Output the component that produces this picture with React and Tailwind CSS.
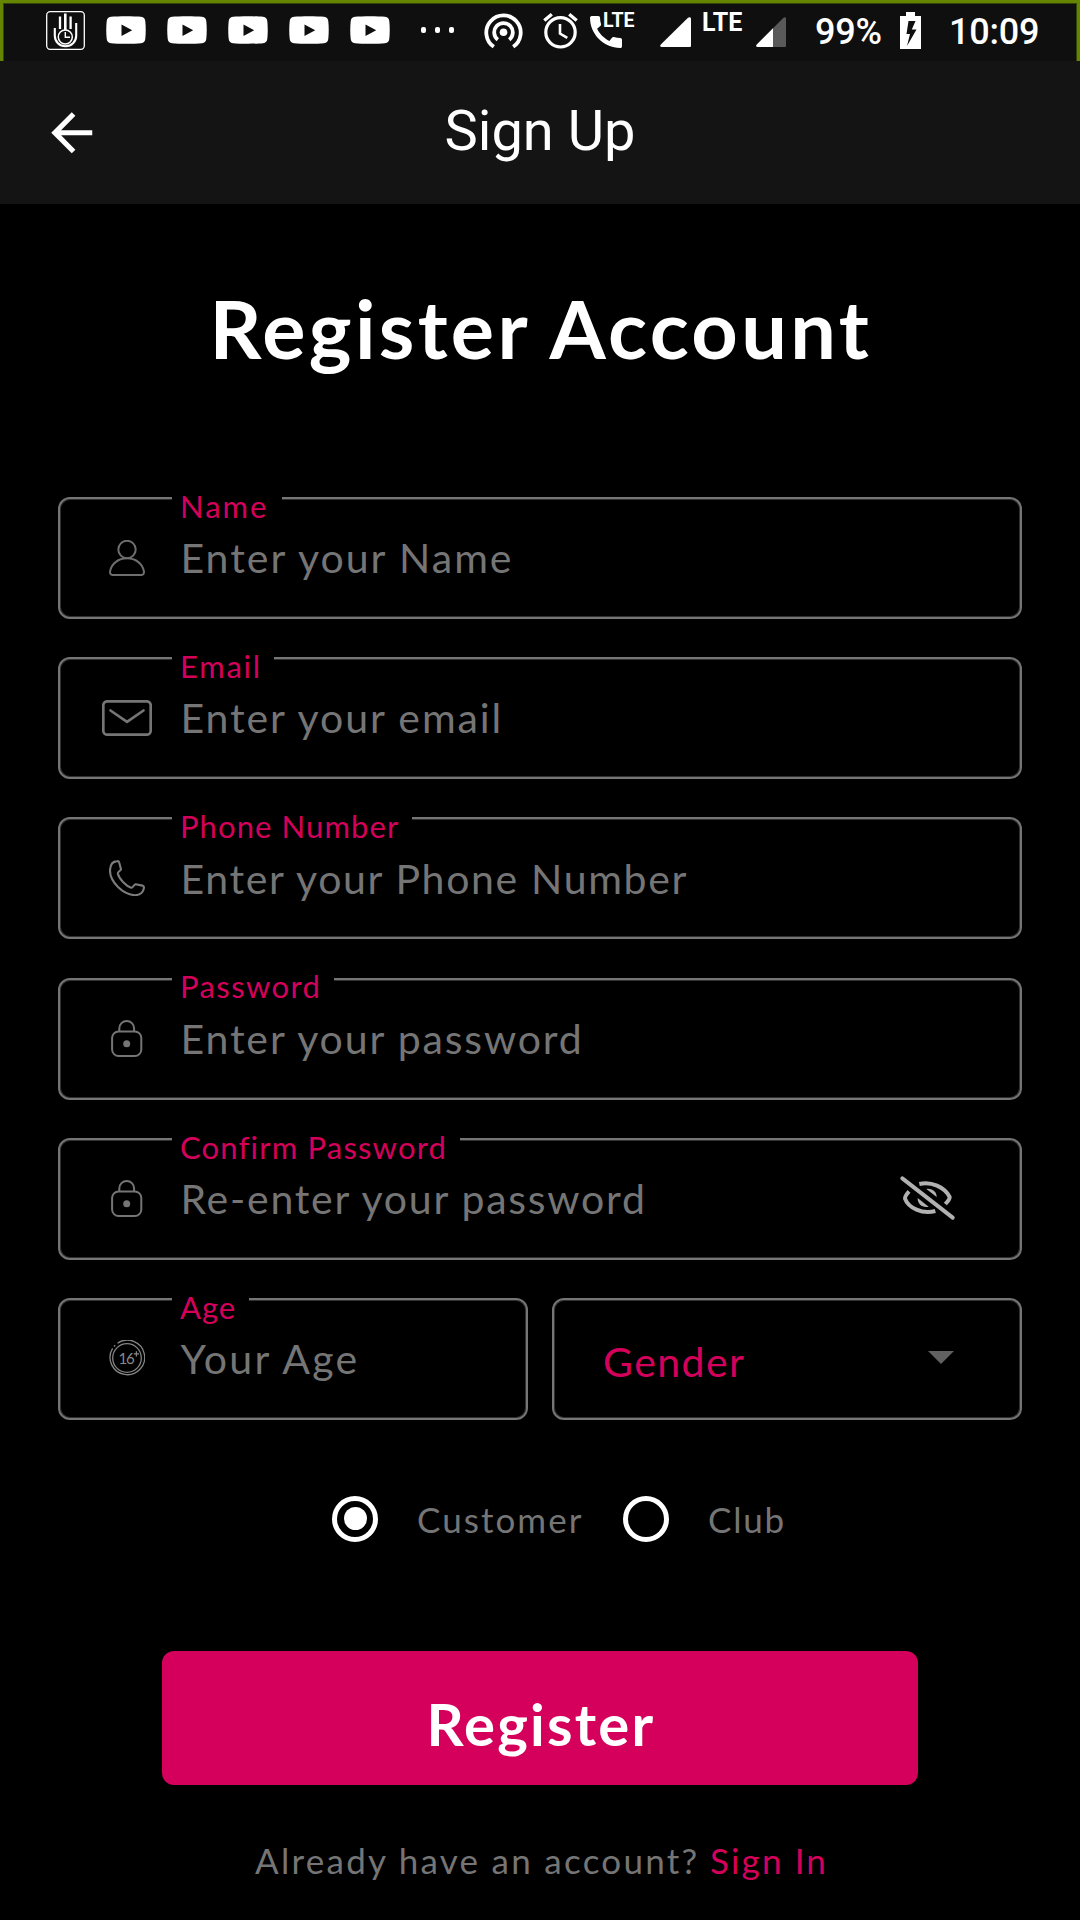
function HandIcon() {
  return (
    <svg className="ml-[43px] mt-2 h-[39px] w-[39px]" viewBox="0 0 39 39" fill="none" stroke="#fff">
      <rect x="0.7" y="0.7" width="37.6" height="37.6" rx="3.5" strokeWidth="1.3" />
      <path d="M8.8 17V24.5C8.8 31 13.5 35.3 19.5 35.3S30.200 31 30.200 24.500V12" strokeWidth="2.100" />
      <path d="M14 5.500V18M24.600 5.500V18" strokeWidth="2.300" />
      <path d="M19.300 2.500V19" strokeWidth="2.600" />
      <circle cx="19.300" cy="26" r="7" strokeWidth="1.500" />
      <path d="M19.300 21V26.300H24" strokeWidth="1.400" />
    </svg>
  );
}

function VideoIcon() {
  return (
    <svg className="mt-[13px] h-7 w-10" viewBox="0 0 40 28">
      <path
        fillRule="evenodd"
        fill="#fff"
        d="M5 .8C12 .1 28 .1 35 .8c3 .4 4 2 4.300 4.500.6 5 .6 12.400 0 17.400-.3 2.500-1.300 4.100-4.300 4.500-7 .7-23 .7-30 0C2 26.800 1 25.200.7 22.700.1 17.700.1 10.300.7 5.300 1 2.800 2 1.200 5 .8ZM15.500 8.500V20L26.200 14.200Z"
      />
    </svg>
  );
}

function StatusBar() {
  return (
    <div className="flex h-[61px] items-start border-x-[3px] border-t-[3px] border-[#658400] bg-[#0f0f0f] font-['Roboto',sans-serif] text-white shadow-[inset_1px_1px_0_#344407,inset_-1px_0_0_#344407]">
      <HandIcon />
      <div className="ml-[21px] flex gap-[21px]">
        <VideoIcon />
        <VideoIcon />
        <VideoIcon />
        <VideoIcon />
        <VideoIcon />
      </div>
      <div className="ml-[31px] mt-6 flex gap-[9px]">
        <span className="h-[6px] w-[5px] rounded-[2px] bg-white" />
        <span className="h-[6px] w-[5px] rounded-[2px] bg-white" />
        <span className="h-[6px] w-[5px] rounded-[2px] bg-white" />
      </div>
      <svg className="ml-[30px] mt-[10px] h-[36px] w-[39px]" viewBox="0 0 39 36" fill="none" stroke="#fff" strokeWidth="3.800">
        <path d="M9.800 33.800A17.200 17.200 0 1 1 29.200 33.800" />
        <path d="M13.800 26.700A9.300 9.300 0 1 1 25.200 26.700" />
        <circle cx="19.500" cy="19.200" r="3.800" fill="#fff" stroke="none" />
      </svg>
      <svg className="ml-[19.500px] mt-[10px] h-[36px] w-[35px]" viewBox="0 0 35 36" fill="none" stroke="#fff">
        <circle cx="17.500" cy="19.300" r="14.700" strokeWidth="3.200" />
        <path d="M1.300 7.500L8.800 1.300M26.200 1.300L33.700 7.500" strokeWidth="3.400" />
        <path d="M17 11V20.500L24.300 24.800" strokeWidth="2.600" />
      </svg>
      <div className="relative ml-[12.500px] mt-[13px] h-8 w-[46px]">
        <svg className="h-8 w-8" viewBox="3 3 18 18" fill="#fff">
          <path d="M20.010 15.380c-1.230 0-2.420-.2-3.530-.56-.35-.12-.74-.03-1.010.24l-1.570 1.970c-2.830-1.350-5.480-3.900-6.890-6.830l1.950-1.660c.27-.28.35-.67.24-1.020-.37-1.110-.56-2.300-.56-3.530 0-.54-.45-.99-.99-.99H4.190C3.650 3 3 3.240 3 3.990 3 13.280 10.730 21 20.010 21c.71 0 .99-.63.99-1.180v-3.450c0-.54-.45-.99-.99-.99z" />
        </svg>
        <span className="absolute left-[13px] top-[-5px] text-[19.500px] font-bold leading-[20px]">LTE</span>
      </div>
      <svg className="ml-[24px] mt-[14px] h-[30px] w-[31px]" viewBox="0 0 31 30" fill="#fff">
        <path d="M1.500 30C0 30-.2 28.500.8 27.500L28 .8C29.500-.3 31 .2 31 2V28.500C31 29.500 30.500 30 29.500 30Z" />
      </svg>
      <span className="ml-[11px] mt-[7px] w-[43px] text-[25px] font-bold leading-[26px]">LTE</span>
      <svg className="ml-[11px] mt-[14px] h-[30px] w-[30px]" viewBox="0 0 30 30">
        <path fill="#595959" d="M1.500 30C0 30-.2 28.500.8 27.500L27.500.8C28.800-.3 30 .2 30 2V28.500C30 29.500 29.500 30 28.500 30Z" />
        <path fill="#fff" d="M17 11.200V30H1.500C0 30-.2 28.500.8 27.500Z" />
      </svg>
      <span className="ml-[29px] mt-[11px] w-[66px] text-[36px] font-medium leading-[36px] tracking-[-0.200px]">99%</span>
      <svg className="ml-[19px] mt-[9px] h-[37px] w-[21px]" viewBox="0 0 21 37">
        <path fillRule="evenodd" fill="#fff" d="M0 4H6V0H15V4H21V37H0ZM8.500 9L6.500 22H10L7 34 16.500 17.500H11.800L15.500 9Z" />
      </svg>
      <span className="ml-[28px] mt-[11px] text-[36px] font-medium leading-[36px] tracking-[-0.200px]">10:09</span>
    </div>
  );
}

function AppBar() {
  return (
    <header className="relative flex h-[143px] items-center justify-center bg-[#141414]">
      <svg className="absolute left-[40.500px] top-[41px] h-[61.500px] w-[61.500px]" viewBox="0 0 24 24" fill="#fff">
        <path d="M20 11H7.830l5.590-5.590L12 4l-8 8 8 8 1.410-1.410L7.830 13H20v-2z" />
      </svg>
      <h1 className="mb-[3px] font-['Roboto',sans-serif] text-[56px] font-normal leading-[56px] text-white">Sign Up</h1>
    </header>
  );
}

const userIcon = (
  <svg className="h-9 w-9" viewBox="0 0 36 36" fill="none" stroke="#6e6e6e" strokeWidth="2">
    <circle cx="18" cy="9.500" r="8.700" />
    <path d="M4.500 35.100C1.800 35.100.7 33.500 1.100 31.200 2.600 23.500 9.500 18.300 18 18.300S33.400 23.500 34.900 31.200C35.300 33.500 34.200 35.100 31.500 35.100Z" />
  </svg>
);

const mailIcon = (
  <svg className="h-9 w-[50px]" viewBox="0 0 50 36" fill="none" stroke="#757575" strokeWidth="2.700" strokeLinecap="round" strokeLinejoin="round">
    <rect x="1.300" y="1.300" width="47.400" height="33.400" rx="4" />
    <path d="M8.500 10.500L25 21.800 41.500 10.500" />
  </svg>
);

const phoneIcon = (
  <svg className="h-9 w-9" viewBox="0 0 36 36" fill="none" stroke="#7c7c7c" strokeWidth="2.100" strokeLinejoin="round">
    <path d="M1 10.500C1.200 4.800 3.800 1.300 8 1.100 9.300 1 10 1.500 10.200 2.500L12 9.200C12.200 10.500 8.500 11.800 8.800 13.500 10 18.800 17 26 22.200 27.800 24 28.200 25 24 26.700 24.200L33.500 25.600C34.800 26 35.100 27 34.900 28.200 34.200 32.500 31 35 26 35.200 14 34.500 1 22 1 10.500Z" />
  </svg>
);

const lockIcon = (
  <svg className="h-[37px] w-8" viewBox="0 0 32 37" fill="none" stroke="#757575" strokeWidth="2">
    <rect x="1.100" y="11.500" width="29.200" height="24.500" rx="6.500" />
    <path d="M8.300 11.500V8.400a7.400 7.400 0 0 1 14.800 0V11.500" />
    <circle cx="15.700" cy="23.700" r="3.500" fill="#757575" stroke="none" />
  </svg>
);

const ageIcon = (
  <svg className="h-9 w-9" viewBox="0 0 36 36" fill="none" stroke="#858585" strokeWidth="1.300">
    <circle cx="18" cy="18" r="14.300" />
    <path d="M8.500 3.200A17.300 17.300 0 1 1 3.600 8.400" />
    <path d="M5 6.500L6.200 5.200" />
    <path d="M24.800 13.800H30M27.400 11.200V16.400" />
    <text x="9.500" y="23.500" fill="#8a8a8a" stroke="none" fontFamily="Lato, sans-serif" fontSize="15" letterSpacing="-1.300">16</text>
  </svg>
);

function EyeOff() {
  return (
    <svg className="absolute right-[64px] top-[35.500px] h-[46px] w-[57px]" viewBox="1078 165 171 138" fill="none" stroke="#b1b1b1" strokeWidth="12">
      <path d="M1088 175L1239 293" strokeLinecap="round" />
      <path d="M1139 192C1175 184 1214 200 1230 231 1231 238 1223 245 1217 252" />
      <path d="M1108 214C1102 221 1095 229 1096 236 1106 264 1148 284 1187 273" />
      <path d="M1160 207C1178 204 1191 216 1191 231Z" fill="#b1b1b1" stroke="none" />
      <path d="M1134 234C1133 252 1148 264 1167 260Z" fill="#b1b1b1" stroke="none" />
    </svg>
  );
}

function Field({ label, labelClass, placeholder, textClass, icon, children }) {
  return (
    <div className="relative flex h-[122px] min-w-0 flex-1 items-start rounded-[12px] border-2 border-[#757575] shadow-[inset_0_0_0_1px_#303030]">
      <div className="ml-[34.500px] flex h-[118px] w-[64px] items-center justify-center pb-px">{icon}</div>
      <span className={"whitespace-nowrap text-[41px] leading-[41px] text-[#757575] " + textClass}>{placeholder}</span>
      <label className={"absolute left-[111.500px] whitespace-nowrap bg-black pl-[8.500px] text-[31px] leading-[31px] text-[#d5005b] " + labelClass}>
        {label}
      </label>
      {children}
    </div>
  );
}

function Radio({ checked }) {
  return (
    <span className="flex h-[46px] w-[46px] items-center justify-center rounded-full border-[5px] border-white">
      {checked && <span className="h-[23px] w-[23px] rounded-full bg-white" />}
    </span>
  );
}

export default function App() {
  return (
    <div className="h-[1920px] w-[1080px] overflow-hidden bg-black font-['Lato',sans-serif]">
      <StatusBar />
      <AppBar />
      <main>
        <h2 className="whitespace-nowrap pl-[209.500px] pt-[83px] text-[81px] font-bold leading-[81px] tracking-[3.330px] text-white">
          Register Account
        </h2>
        <form className="mt-[129px] flex flex-col gap-[38.200px] px-[58px]">
          <Field label="Name" labelClass="top-[-8.500px] w-[110px] tracking-[2px]" placeholder="Enter your Name" textClass="mt-[38px] ml-[22px] tracking-[1.990px]" icon={userIcon} />
          <Field label="Email" labelClass="top-[-8.500px] w-[102px] tracking-[1.750px]" placeholder="Enter your email" textClass="mt-[38px] ml-[22px] tracking-[1.920px]" icon={mailIcon} />
          <Field label="Phone Number" labelClass="top-[-8.500px] w-[240px] tracking-[1.100px]" placeholder="Enter your Phone Number" textClass="mt-[38.500px] ml-[22px] tracking-[1.660px]" icon={phoneIcon} />
          <Field label="Password" labelClass="top-[-8.500px] w-[162px] tracking-[1.400px]" placeholder="Enter your password" textClass="mt-[38.500px] ml-[22px] tracking-[1.860px]" icon={lockIcon} />
          <Field label="Confirm Password" labelClass="top-[-7.500px] w-[288px] tracking-[1.180px]" placeholder="Re-enter your password" textClass="mt-[38.500px] ml-[22px] tracking-[1.750px]" icon={lockIcon}>
            <EyeOff />
          </Field>
          <div className="grid grid-cols-2 gap-6">
            <Field label="Age" labelClass="top-[-7.500px] w-[77px] tracking-[1px]" placeholder="Your Age" textClass="mt-[38.500px] ml-[22px] tracking-[2.250px]" icon={ageIcon} />
            <div className="flex h-[122px] items-start justify-between rounded-[12px] border-2 border-[#757575] pl-[49px] pr-[66px] text-[#d5005b] shadow-[inset_0_0_0_1px_#303030]">
              <span className="mt-[41.500px] text-[41px] leading-[41px] tracking-[1.440px]">Gender</span>
              <svg className="mt-[51px] h-[13px] w-[26px]" viewBox="0 0 26 13" fill="#616161">
                <path d="M0 0H26L13 13Z" />
              </svg>
            </div>
          </div>
        </form>
        <div className="mt-[76px] flex h-[46px] items-center pl-[332px] text-[35px] leading-[35px] text-[#757575]">
          <Radio checked />
          <span className="ml-[39px] mt-[2px] w-[206px] tracking-[2.050px]">Customer</span>
          <Radio />
          <span className="ml-[39px] mt-[2px] tracking-[1.770px]">Club</span>
        </div>
        <button className="mx-auto mt-[109px] flex h-[134px] w-[756px] items-start rounded-[12px] bg-[#d5005b] pl-[264.500px] pt-[44.500px] text-left text-[58px] font-bold leading-[58px] tracking-[2.200px] text-white">
          Register
        </button>
        <p className="mt-[58px] flex whitespace-nowrap pl-[255px] text-[35px] leading-[35px] text-[#757575]">
          <span className="w-[455px] tracking-[2.270px]">Already have an account?</span>
          <a className="tracking-[2.150px] text-[#d5005b]">Sign In</a>
        </p>
      </main>
    </div>
  );
}
